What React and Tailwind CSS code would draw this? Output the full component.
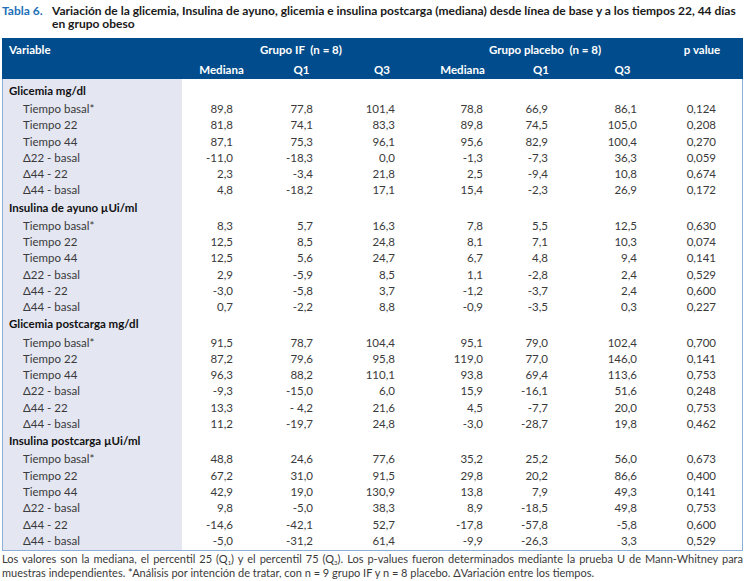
const sections = [
  {
    title: "Glicemia mg/dl",
    rows: [
      ["Tiempo basal*", "89,8", "77,8", "101,4", "78,8", "66,9", "86,1", "0,124"],
      ["Tiempo 22", "81,8", "74,1", "83,3", "89,8", "74,5", "105,0", "0,208"],
      ["Tiempo 44", "87,1", "75,3", "96,1", "95,6", "82,9", "100,4", "0,270"],
      ["Δ22 - basal", "-11,0", "-18,3", "0,0", "-1,3", "-7,3", "36,3", "0,059"],
      ["Δ44 - 22", "2,3", "-3,4", "21,8", "2,5", "-9,4", "10,8", "0,674"],
      ["Δ44 - basal", "4,8", "-18,2", "17,1", "15,4", "-2,3", "26,9", "0,172"],
    ],
  },
  {
    title: "Insulina de ayuno µUi/ml",
    rows: [
      ["Tiempo basal*", "8,3", "5,7", "16,3", "7,8", "5,5", "12,5", "0,630"],
      ["Tiempo 22", "12,5", "8,5", "24,8", "8,1", "7,1", "10,3", "0,074"],
      ["Tiempo 44", "12,5", "5,6", "24,7", "6,7", "4,8", "9,4", "0,141"],
      ["Δ22 - basal", "2,9", "-5,9", "8,5", "1,1", "-2,8", "2,4", "0,529"],
      ["Δ44 - 22", "-3,0", "-5,8", "3,7", "-1,2", "-3,7", "2,4", "0,600"],
      ["Δ44 - basal", "0,7", "-2,2", "8,8", "-0,9", "-3,5", "0,3", "0,227"],
    ],
  },
  {
    title: "Glicemia postcarga mg/dl",
    rows: [
      ["Tiempo basal*", "91,5", "78,7", "104,4", "95,1", "79,0", "102,4", "0,700"],
      ["Tiempo 22", "87,2", "79,6", "95,8", "119,0", "77,0", "146,0", "0,141"],
      ["Tiempo 44", "96,3", "88,2", "110,1", "93,8", "69,4", "113,6", "0,753"],
      ["Δ22 - basal", "-9,3", "-15,0", "6,0", "15,9", "-16,1", "51,6", "0,248"],
      ["Δ44 - 22", "13,3", "- 4,2", "21,6", "4,5", "-7,7", "20,0", "0,753"],
      ["Δ44 - basal", "11,2", "-19,7", "24,8", "-3,0", "-28,7", "19,8", "0,462"],
    ],
  },
  {
    title: "Insulina postcarga µUi/ml",
    rows: [
      ["Tiempo basal*", "48,8", "24,6", "77,6", "35,2", "25,2", "56,0", "0,673"],
      ["Tiempo 22", "67,2", "31,0", "91,5", "29,8", "20,2", "86,6", "0,400"],
      ["Tiempo 44", "42,9", "19,0", "130,9", "13,8", "7,9", "49,3", "0,141"],
      ["Δ22 - basal", "9,8", "-5,0", "38,3", "8,9", "-18,5", "49,8", "0,753"],
      ["Δ44 - 22", "-14,6", "-42,1", "52,7", "-17,8", "-57,8", "-5,8", "0,600"],
      ["Δ44 - basal", "-5,0", "-31,2", "61,4", "-9,9", "-26,3", "3,3", "0,529"],
    ],
  },
];

const bodyCols = "grid grid-cols-[179px_51px_80px_82px_88px_65px_89px_79px_1fr]";

export default function App() {
  return (
    <div className="w-[750px] h-[581px] bg-white overflow-hidden font-['Lato',sans-serif] text-[#3a3a3a]">
      {/* TITLE */}
      <div className="flex pl-[2px] pt-[4px] text-[12px] leading-[13px] font-bold">
        <span className="w-[50px] shrink-0 text-[#2370b8]">Tabla 6.</span>
        <span className="text-[#1a1a1a] whitespace-nowrap">
          Variación de la glicemia, Insulina de ayuno, glicemia e insulina postcarga (mediana) desde línea de base y a los tiempos 22, 44 días
          <br />
          en grupo obeso
        </span>
      </div>

      {/* TABLE */}
      <div className="ml-[2px] mt-[8px] w-[741px] border-x border-b border-[#8daed6]">
        <div className="bg-[#004c8c] text-white font-bold text-[11.5px] -mx-px">
          <div className="grid grid-cols-[180px_238px_250px_64px_1fr] h-[23px] items-center">
            <span className="pl-[7px]">Variable</span>
            <span className="text-center">Grupo IF&nbsp; (n = 8)</span>
            <span className="text-center">Grupo placebo&nbsp; (n = 8)</span>
            <span className="text-center">p value</span>
          </div>
          <div className="grid grid-cols-[180px_79px_81px_80px_81px_76px_87px_1fr] h-[18px] items-center">
            <span />
            <span className="text-center">Mediana</span>
            <span className="text-center">Q1</span>
            <span className="text-center">Q3</span>
            <span className="text-center">Mediana</span>
            <span className="text-center">Q1</span>
            <span className="text-center">Q3</span>
          </div>
        </div>

        <div className="text-[11.5px] py-[2px] bg-[linear-gradient(to_right,#e4e6f2_179px,transparent_179px)]">
          {sections.map((s) => (
            <div key={s.title}>
              <div className="h-[19px] flex items-center pl-[6px] font-bold text-[#111]">
                {s.title}
              </div>
              {s.rows.map((r, i) => (
                <div key={i} className={`${bodyCols} h-[16.3px] items-center`}>
                  <span className="pl-[20px]">{r[0]}</span>
                  {r.slice(1).map((v, j) => (
                    <span key={j} className="text-right">
                      {v}
                    </span>
                  ))}
                </div>
              ))}
            </div>
          ))}
        </div>
      </div>

      {/* FOOTNOTE */}
      <p className="mx-[2px] mt-[1px] w-[741px] text-[11px] leading-[14px] text-justify text-[#3a3a3a]">
        Los valores son la mediana, el percentil 25 (Q<span className="text-[6px] leading-none relative top-[2px]">1</span>) y el percentil 75 (Q
        <span className="text-[6px] leading-none relative top-[2px]">3</span>). Los p-values fueron determinados mediante la prueba U de Mann-Whitney para
        muestras independientes. *Análisis por intención de tratar, con n = 9 grupo IF y n = 8 placebo. ΔVariación entre
        los tiempos.
      </p>
    </div>
  );
}
